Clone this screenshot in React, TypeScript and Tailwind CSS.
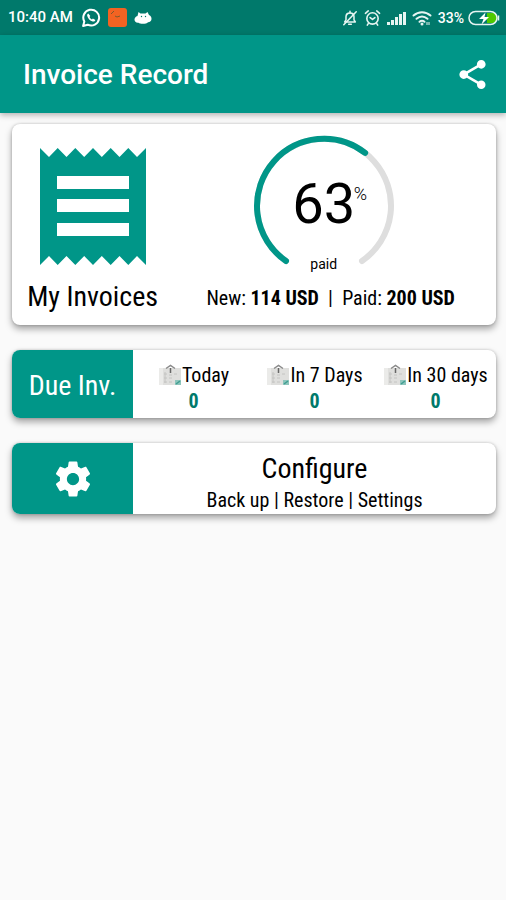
import type { ReactNode } from 'react';

const CONDENSED = "font-['Roboto_Condensed',Roboto,sans-serif]";

// 290 degree dial, open at the bottom
const GAUGE_ARC = 'M36 129A67 67 0 1 1 112 129';

const DUE_COLUMNS = [
  { label: 'Today', count: 0 },
  { label: 'In 7 Days', count: 0 },
  { label: 'In 30 days', count: 0 },
];

function WhatsAppIcon() {
  return (
    <svg viewBox="0 0 24 24" className="h-5 w-5" aria-hidden="true">
      <path
        d="M2.500 21.500l1.500-5.300A9.500 9.500 0 1 1 8 20z"
        fill="none"
        stroke="#fff"
        strokeWidth="2.400"
        strokeLinejoin="round"
      />
      <path
        d="M8.700 6.500c-1.100.6-1.600 1.700-1.200 3.200.8 3 3.300 5.700 6.500 6.500 1.600.3 2.900-.4 3.200-1.900l-2.900-1.700-1.200 1.200c-1.300-.6-2.300-1.600-2.900-2.900l1-1.300z"
        fill="#fff"
      />
    </svg>
  );
}

function CatIcon() {
  return (
    <svg viewBox="0 0 18 14" className="h-[14px] w-[18px]" aria-hidden="true">
      <path
        d="M4.500 1l2 1.500h5l2-1.500 1.500 3c2 .8 2.500 2.500 2.500 4 0 2-1.500 3-3.500 3.200-1.500 2-8 2-9.500.5C2 12 .5 10.500.5 8.500.5 7 1.500 5.500 3.500 5z"
        fill="#fff"
      />
      <circle cx="7.500" cy="5.500" r=".7" fill="#00796b" />
      <circle cx="11.500" cy="5.500" r=".7" fill="#00796b" />
    </svg>
  );
}

function BellOffIcon() {
  return (
    <svg viewBox="0 0 18 18" className="h-[18px] w-[16px]" aria-hidden="true">
      <g fill="none" stroke="#e6f5f2" strokeWidth="1.700" strokeLinecap="round" strokeLinejoin="round">
        <path d="M3 13.500h12l-1.500-2.500V7.500C13.500 5 11.500 3.500 9 3.500S4.500 5 4.500 7.500V11z" />
        <path d="M9 1.500v2M7.500 16h3M2 16.500L16 2" />
      </g>
    </svg>
  );
}

function AlarmIcon() {
  return (
    <svg viewBox="0 0 18 18" className="h-[18px] w-[17px]" aria-hidden="true">
      <g fill="none" stroke="#e6f5f2" strokeWidth="1.700" strokeLinecap="round" strokeLinejoin="round">
        <circle cx="9" cy="9.500" r="6" />
        <path d="M6.500 8.500L9 10.500l2.500-2M1.500 4l3-2.500M16.500 4l-3-2.500M4.500 15L3.500 16.500M13.500 15l1 1.500" />
      </g>
    </svg>
  );
}

function SignalIcon() {
  return (
    <svg viewBox="0 0 19 14" className="h-[14px] w-[19px]" aria-hidden="true">
      <g fill="#e6f5f2">
        <rect x="0" y="11" width="3" height="3" />
        <rect x="4" y="9" width="3" height="5" />
        <rect x="8" y="6" width="3" height="8" />
        <rect x="12" y="3" width="3" height="11" />
        <rect x="16" y="1" width="3" height="13" />
      </g>
    </svg>
  );
}

function WifiIcon() {
  return (
    <svg viewBox="0 0 20 16" className="h-[16px] w-[20px]" aria-hidden="true">
      <g fill="none" stroke="#e6f5f2" strokeWidth="2" strokeLinecap="round">
        <path d="M1.500 5.500C6.500 1 13.500 1 18.500 5.500" />
        <path d="M4.500 8.800c3.500-3 7.500-3 11 0" />
        <path d="M7.500 11.800c1.700-1.400 3.300-1.400 5 0" />
      </g>
      <circle cx="10" cy="14" r="1.500" fill="#e6f5f2" />
      <path d="M15 12v3M17 12v3" stroke="#e6f5f2" />
    </svg>
  );
}

function BatteryIcon() {
  return (
    <svg viewBox="0 0 32 16" className="h-[16px] w-[32px]" aria-hidden="true">
      <path d="M19 3h5.500a5 5 0 0 1 0 10H19z" fill="#4fc800" />
      <rect x="1" y="1.500" width="28" height="13" rx="6.500" fill="none" stroke="#e6f5f2" strokeWidth="1.500" />
      <path d="M30.500 5.500v5" stroke="#e6f5f2" strokeWidth="1.500" />
      <path d="M17.500 2.500L11 9h4.500l-2 5.500 7.500-7.500h-4.500z" fill="#fff" />
    </svg>
  );
}

function StatusBar() {
  return (
    <div className="flex h-[35px] items-center bg-[#00796b] pr-1.5 pl-2 text-[15px] font-medium text-white">
      <span>10:40 AM</span>
      <div className="ml-2 flex items-center gap-[7px]">
        <WhatsAppIcon />
        <svg viewBox="0 0 19 19" className="h-[19px] w-[19px]" aria-hidden="true">
          <rect width="19" height="19" rx="3" fill="#f26322" />
          <path d="M3 6l3-3M7 8l2 1 3-1" stroke="#7a5a2c" fill="none" />
        </svg>
        <CatIcon />
      </div>
      <div className="ml-auto flex items-center gap-1.5">
        <BellOffIcon />
        <AlarmIcon />
        <SignalIcon />
        <WifiIcon />
        <span className="text-sm">33%</span>
      </div>
      <div className="ml-1">
        <BatteryIcon />
      </div>
    </div>
  );
}

function ReceiptIcon() {
  return (
    <svg viewBox="0 0 106 117" className="h-[117px] w-[106px]" aria-hidden="true">
      <path
        d="M0 0l9 9 8.700-9 8.800 9 8.800-9 8.900 9L53 0l8.800 9 8.900-9 8.800 9 8.800-9L97 9l9-9v117l-9-9-8.700 9-8.800-9-8.800 9-8.900-9-8.800 9-8.800-9-8.900 9-8.800-9-8.800 9L9 108l-9 9z"
        fill="#009688"
      />
      <path d="M17 28h72v13H17zM17 51h72v13H17zM17 75h72v13H17z" fill="#fff" />
    </svg>
  );
}

function CalendarIcon() {
  return (
    <svg viewBox="0 0 24 22" className="h-[22px] w-[24px] shrink-0" aria-hidden="true">
      <path d="M1 4h22v17H1z" fill="#dfdfdd" />
      <path d="M1 4h4v17H1z" fill="#ebebe9" />
      <path d="M8 4.500L12.500 1.500 17 4.500" fill="none" stroke="#8a8a8a" strokeWidth="1.500" />
      <path d="M12.500 4v5" stroke="#666" strokeWidth="1.500" />
      <path d="M6 10h3M11 11h3M16 10h3M6 14h3M11 14h3M6 18h3M11 18h3M7 8v11" stroke="#c4c4c2" />
      <path d="M17 16h6v5h-6z" fill="#8ec5bc" />
      <path d="M18 20l4-3" stroke="#3f9e91" strokeWidth="1.500" />
    </svg>
  );
}

function PaidGauge({ percent }: { percent: number }) {
  return (
    <div className="relative h-[144px] w-[148px] font-[Roboto,sans-serif]">
      <svg viewBox="0 0 148 144" className="h-full w-full" fill="none" strokeWidth="6" aria-hidden="true">
        <path d={GAUGE_ARC} stroke="#dedede" strokeLinecap="round" />
        <path
          d={GAUGE_ARC}
          stroke="#009688"
          strokeLinecap="round"
          pathLength="100"
          strokeDasharray={`${percent} 200`}
        />
      </svg>
      <div className="absolute inset-0 flex items-center justify-center text-[56px] leading-none">
        {percent}
      </div>
      <span className="absolute top-[52px] left-[104px] text-lg leading-5 font-light">%</span>
      <span className="absolute inset-x-0 bottom-1 text-center text-sm leading-4">paid</span>
    </div>
  );
}

function Card({ children }: { children: ReactNode }) {
  return (
    <section className="flex overflow-hidden rounded-lg bg-white shadow-[0_4px_7px_rgba(0,0,0,0.35),0_0_3px_rgba(0,0,0,0.2)]">
      {children}
    </section>
  );
}

export default function App() {
  return (
    <div className="min-h-screen bg-[#fafafa] font-[Roboto,sans-serif]">
      <StatusBar />
      <header className="flex h-[78px] items-center justify-between bg-[#009688] pr-4 pl-[23px] shadow-[0_2px_6px_rgba(0,0,0,0.3)]">
        <h1 className="pt-0.5 text-[28px] font-medium text-white">Invoice Record</h1>
        <button type="button" aria-label="Share">
          <svg viewBox="0 0 24 24" className="h-[35px] w-[35px]" fill="#fff" aria-hidden="true">
            <path d="M18 16.080c-.76 0-1.440.3-1.960.770L8.910 12.700c.05-.23.090-.46.090-.7s-.04-.47-.09-.7l7.050-4.110c.54.5 1.250.810 2.040.810 1.660 0 3-1.340 3-3s-1.340-3-3-3-3 1.340-3 3c0 .24.040.47.090.7L8.040 9.810C7.500 9.310 6.790 9 6 9c-1.660 0-3 1.340-3 3s1.340 3 3 3c.79 0 1.500-.31 2.040-.81l7.120 4.160c-.05.21-.08.43-.08.65 0 1.610 1.310 2.920 2.920 2.920s2.920-1.310 2.920-2.920-1.310-2.920-2.920-2.920z" />
          </svg>
        </button>
      </header>

      <main className={`flex flex-col gap-[25px] pt-[11px] pr-[10px] pl-3 text-black ${CONDENSED}`}>
        <Card>
          <div className="flex w-1/3 flex-col items-center pt-6 pb-3">
            <ReceiptIcon />
            <h2 className="mt-4 text-[28px] leading-8">My Invoices</h2>
          </div>
          <div className="flex flex-1 flex-col items-center pt-2 pr-2 pb-3">
            <div className="mr-3.5">
              <PaidGauge percent={63} />
            </div>
            <p className="mt-2.5 text-[20px] leading-6 whitespace-pre">
              New: <b>114 USD</b>
              {'  |  '}Paid: <b>200 USD</b>
            </p>
          </div>
        </Card>

        <Card>
          <h2 className="flex w-1/4 items-center justify-center bg-[#009688] pt-1 text-[28px] text-white">Due Inv.</h2>
          {DUE_COLUMNS.map((c) => (
            <div key={c.label} className="flex w-1/4 flex-col items-center pt-3 pb-1 text-[20px]">
              <div className="flex items-center leading-[26px] whitespace-nowrap">
                <CalendarIcon />
                <span>{c.label}</span>
              </div>
              <span className="leading-[26px] font-bold text-[#00796b]">{c.count}</span>
            </div>
          ))}
        </Card>

        <Card>
          <div className="flex w-1/4 items-center justify-center bg-[#009688]">
            <svg viewBox="0 0 24 24" className="h-[42px] w-[42px]" fill="#fff" aria-hidden="true">
              <path d="M19.430 12.980c.04-.32.070-.64.070-.98s-.03-.66-.07-.98l2.110-1.650c.19-.15.240-.42.120-.64l-2-3.460c-.12-.22-.39-.3-.61-.22l-2.490 1c-.52-.4-1.080-.73-1.690-.98l-.38-2.650C14.460 2.180 14.250 2 14 2h-4c-.25 0-.46.180-.49.420l-.38 2.650c-.61.250-1.170.590-1.690.980l-2.490-1c-.23-.09-.49 0-.61.220l-2 3.460c-.13.220-.07.490.120.640l2.110 1.650c-.04.320-.07.650-.07.980s.03.660.070.980l-2.110 1.650c-.19.150-.24.420-.12.640l2 3.460c.12.220.39.3.610.220l2.490-1c.52.4 1.080.730 1.690.980l.38 2.650c.03.240.24.420.490.420h4c.25 0 .46-.18.490-.42l.38-2.650c.61-.25 1.170-.59 1.690-.98l2.490 1c.23.090.49 0 .61-.22l2-3.460c.12-.22.070-.49-.12-.64l-2.110-1.650zM12 15.500c-1.930 0-3.500-1.570-3.500-3.500s1.570-3.500 3.500-3.500 3.500 1.570 3.500 3.500-1.570 3.500-3.500 3.500z" />
            </svg>
          </div>
          <div className="flex w-3/4 flex-col items-center pt-2 pb-px">
            <h2 className="text-[28px] leading-9">Configure</h2>
            <p className="text-[20px] leading-[26px]">Back up | Restore | Settings</p>
          </div>
        </Card>
      </main>
    </div>
  );
}
